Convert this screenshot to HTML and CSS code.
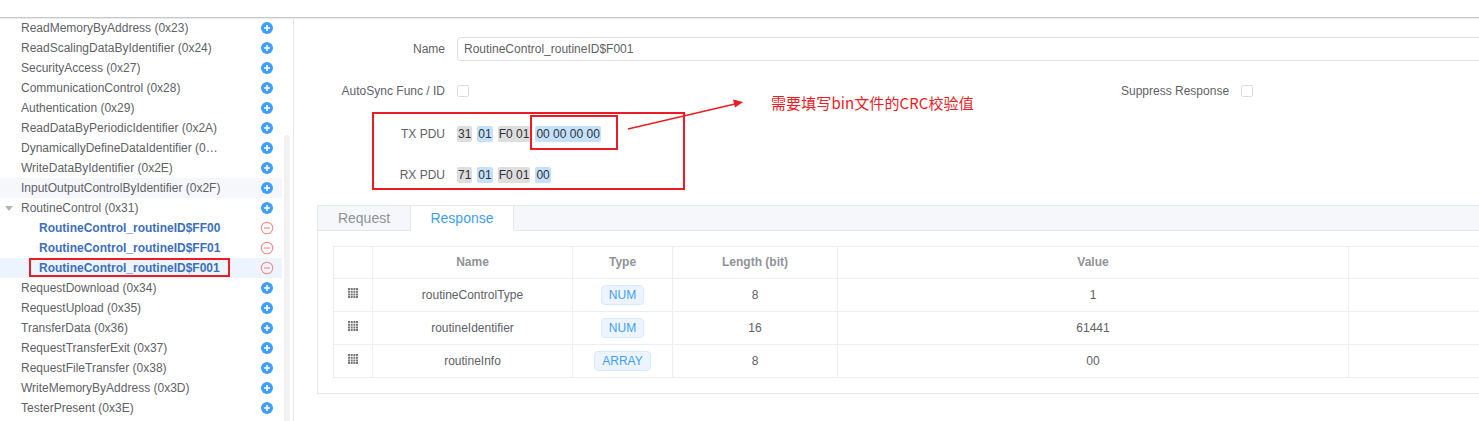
FILE: index.html
```html
<!DOCTYPE html>
<html lang="en">
<head>
<meta charset="utf-8">
<title>Routine Control</title>
<link rel="stylesheet" href="styles.css">
</head>
<body>
<svg class="defs" width="0" height="0" aria-hidden="true">
  <symbol id="plus" viewBox="0 0 12 12"><circle cx="6" cy="6" r="6" fill="#409eff"/><path d="M3 6h6M6 3v6" stroke="#fff" stroke-width="1.5"/></symbol>
  <symbol id="minus" viewBox="0 0 14 14"><circle cx="7" cy="7" r="5.75" fill="none" stroke="#f78989" stroke-width="1.1"/><path d="M4 7h6" stroke="#f9a7a7" stroke-width="1.6"/></symbol>
  <symbol id="grid" viewBox="0 0 10 10"><path fill="#777" d="M0 0h2v2H0zM2.7 0h2v2h-2zM5.4 0h2v2h-2zM8 0h2v2H8zM0 2.7h2v2H0zM2.7 2.7h2v2h-2zM5.4 2.7h2v2h-2zM8 2.7h2v2H8zM0 5.4h2v2H0zM2.7 5.4h2v2h-2zM5.4 5.4h2v2h-2zM8 5.4h2v2H8zM0 8h2v2H0zM2.7 8h2v2h-2zM5.4 8h2v2h-2zM8 8h2v2H8z"/></symbol>
</svg>
<header class="topbar"></header>
<div class="layout">
  <aside class="sidebar">
    <ul class="tree">
      <li class="row"><span class="label">ReadMemoryByAddress (0x23)</span><svg class="ico"><use href="#plus"/></svg></li>
      <li class="row"><span class="label">ReadScalingDataByIdentifier (0x24)</span><svg class="ico"><use href="#plus"/></svg></li>
      <li class="row"><span class="label">SecurityAccess (0x27)</span><svg class="ico"><use href="#plus"/></svg></li>
      <li class="row"><span class="label">CommunicationControl (0x28)</span><svg class="ico"><use href="#plus"/></svg></li>
      <li class="row"><span class="label">Authentication (0x29)</span><svg class="ico"><use href="#plus"/></svg></li>
      <li class="row"><span class="label">ReadDataByPeriodicIdentifier (0x2A)</span><svg class="ico"><use href="#plus"/></svg></li>
      <li class="row"><span class="label">DynamicallyDefineDataIdentifier (0…</span><svg class="ico"><use href="#plus"/></svg></li>
      <li class="row"><span class="label">WriteDataByIdentifier (0x2E)</span><svg class="ico"><use href="#plus"/></svg></li>
      <li class="row hover"><span class="label">InputOutputControlByIdentifier (0x2F)</span><svg class="ico"><use href="#plus"/></svg></li>
      <li class="row"><span class="caret"></span><span class="label">RoutineControl (0x31)</span><svg class="ico"><use href="#plus"/></svg></li>
      <li class="row child"><span class="label">RoutineControl_routineID$FF00</span><svg class="ico-m"><use href="#minus"/></svg></li>
      <li class="row child"><span class="label">RoutineControl_routineID$FF01</span><svg class="ico-m"><use href="#minus"/></svg></li>
      <li class="row child selected"><span class="label">RoutineControl_routineID$F001</span><svg class="ico-m"><use href="#minus"/></svg></li>
      <li class="row"><span class="label">RequestDownload (0x34)</span><svg class="ico"><use href="#plus"/></svg></li>
      <li class="row"><span class="label">RequestUpload (0x35)</span><svg class="ico"><use href="#plus"/></svg></li>
      <li class="row"><span class="label">TransferData (0x36)</span><svg class="ico"><use href="#plus"/></svg></li>
      <li class="row"><span class="label">RequestTransferExit (0x37)</span><svg class="ico"><use href="#plus"/></svg></li>
      <li class="row"><span class="label">RequestFileTransfer (0x38)</span><svg class="ico"><use href="#plus"/></svg></li>
      <li class="row"><span class="label">WriteMemoryByAddress (0x3D)</span><svg class="ico"><use href="#plus"/></svg></li>
      <li class="row"><span class="label">TesterPresent (0x3E)</span><svg class="ico"><use href="#plus"/></svg></li>
    </ul>
    <div class="thumb"></div>
    <div class="mark mark-tree"></div>
  </aside>
  <main class="main">
    <div class="inner">
      <div class="field field-name">
        <label class="flabel">Name</label>
        <div class="input">RoutineControl_routineID$F001</div>
      </div>
      <div class="field field-sync">
        <label class="flabel">AutoSync Func / ID</label>
        <span class="check"></span>
        <label class="flabel-free">Suppress Response</label>
        <span class="check"></span>
      </div>
      <div class="field field-tx">
        <label class="flabel">TX PDU</label>
        <div class="chips">
          <span class="chip gray">31</span><span class="chip blue">01</span><span class="chip gray">F0 01</span><span class="chip blue">00 00 00 00</span>
        </div>
      </div>
      <div class="field field-rx">
        <label class="flabel">RX PDU</label>
        <div class="chips">
          <span class="chip gray">71</span><span class="chip blue">01</span><span class="chip gray">F0 01</span><span class="chip blue">00</span>
        </div>
      </div>
      <section class="tabs">
        <div class="tabbar">
          <span class="tab">Request</span>
          <span class="tab active">Response</span>
        </div>
        <div class="panel">
          <table class="grid">
            <colgroup>
              <col class="c1"><col class="c2"><col class="c3"><col class="c4"><col class="c5"><col class="c6">
            </colgroup>
            <thead>
              <tr><th></th><th>Name</th><th>Type</th><th>Length (bit)</th><th>Value</th><th></th></tr>
            </thead>
            <tbody>
              <tr><td><svg class="drag"><use href="#grid"/></svg></td><td>routineControlType</td><td><span class="tag">NUM</span></td><td>8</td><td>1</td><td></td></tr>
              <tr><td><svg class="drag"><use href="#grid"/></svg></td><td>routineIdentifier</td><td><span class="tag">NUM</span></td><td>16</td><td>61441</td><td></td></tr>
              <tr><td><svg class="drag"><use href="#grid"/></svg></td><td>routineInfo</td><td><span class="tag">ARRAY</span></td><td>8</td><td>00</td><td></td></tr>
            </tbody>
          </table>
        </div>
      </section>
    </div>
    <div class="mark mark-pdu"></div>
    <div class="mark mark-crc"></div>
    <svg class="arrow" width="120" height="34" viewBox="0 0 120 34"><path d="M1 32 L108 7" stroke="#ed1c24" stroke-width="1.5" fill="none"/><path d="M116 5 L106 2.5 L108 10.5 Z" fill="#ed1c24"/></svg>
    <div class="note">需要填写bin文件的CRC校验值</div>
  </main>
</div>
</body>
</html>
```

FILE: styles.css
```css
* { box-sizing: border-box; }
html, body { margin: 0; height: 100%; overflow: hidden; background: #fff; }
body { font-family: "Liberation Sans", Arial, sans-serif; font-size: 12px; color: #606266; }
.defs { position: absolute; }

.topbar { height: 18px; border-bottom: 1px solid #c8c9cc; box-shadow: 0 1px 0 #e9e9eb; position: relative; z-index: 2; background: #fff; }
.layout { display: flex; height: 403px; overflow: hidden; }

.sidebar { width: 294px; flex: none; position: relative; border-right: 1px solid #e6e6e6; overflow: hidden; }
.tree { list-style: none; margin: 0; padding: 0; width: 282px; }
.row { height: 20px; display: flex; align-items: center; padding-left: 21px; position: relative; }
.row .label { white-space: nowrap; }
.row.hover { background: #f5f7fa; }
.row.selected { background: #ecf5ff; }
.row.child { padding-left: 39px; }
.row.child .label { font-weight: bold; color: #3c6fbe; }
.ico { width: 12px; height: 12px; position: absolute; left: 261px; top: 4px; }
.ico-m { width: 14px; height: 14px; position: absolute; left: 260px; top: 3px; }
.caret { position: absolute; left: 5px; top: 8px; border-style: solid; border-width: 5px 4px 0; border-color: #b4b4b4 transparent transparent; }
.thumb { position: absolute; left: 284px; top: 117px; width: 6px; bottom: 0; background: #f1f1f1; border-radius: 3px 3px 0 0; }

.main { flex: 1; min-width: 0; position: relative; overflow: hidden; }
.inner { width: 1700px; }
.field { display: flex; align-items: center; }
.flabel { width: 151px; margin-right: 12px; text-align: right; flex: none; }
.flabel-free { margin-left: 652px; margin-right: 12px; }
.field-name { margin-top: 19px; height: 24px; }
.field-sync { margin-top: 18px; height: 24px; }
.field-tx { margin-top: 19px; height: 24px; }
.field-rx { margin-top: 17px; height: 24px; }
.input { flex: 1; height: 24px; line-height: 22px; padding: 0 6px; border: 1px solid #dcdfe6; border-radius: 4px; }
.check { width: 12px; height: 12px; border: 1px solid #dcdfe6; border-radius: 2px; flex: none; }
.chips { display: flex; gap: 5px; }
.chip { height: 16px; line-height: 16px; padding: 0 1px; border-radius: 2px; color: #303133; white-space: pre; }
.chip.gray { background: #dedede; }
.chip.blue { background: #c4e1ff; }

.tabs { margin: 18px 0 0 23px; border: 1px solid #e4e7ed; height: 189px; }
.tabbar { display: flex; height: 25px; background: #f5f7fa; border-bottom: 1px solid #e4e7ed; }
.tab { height: 25px; line-height: 25px; font-size: 14px; text-align: center; color: #909399; width: 93px; border-right: 1px solid #e4e7ed; }
.tab.active { width: 103px; color: #409eff; background: #fff; border-bottom: 1px solid #fff; }
.panel { padding: 15px; }
.grid { border-collapse: collapse; table-layout: fixed; width: 1350px; }
.c1 { width: 39px; } .c2 { width: 200px; } .c3 { width: 100px; } .c4 { width: 165px; } .c5 { width: 511px; }
.grid th, .grid td { border: 1px solid #ebeef5; text-align: center; padding: 0; }
.grid th { height: 32px; padding-bottom: 2px; font-weight: bold; color: #909399; }
.grid td { height: 33px; }
.tag { display: inline-block; height: 20px; line-height: 18px; padding: 0 7px; background: #ecf5ff; border: 1px solid #d9ecff; border-radius: 4px; color: #409eff; vertical-align: middle; }
.drag { width: 10px; height: 10px; display: block; margin: -5px auto 0; }

.mark { position: absolute; border: 2px solid #ed1c24; pointer-events: none; }
.mark-tree { left: 29px; top: 240px; width: 201px; height: 19px; }
.mark-pdu { left: 78px; top: 94px; width: 313px; height: 78px; }
.mark-crc { left: 236px; top: 97px; width: 88px; height: 35px; }
.arrow { position: absolute; left: 333px; top: 79px; }
.note { position: absolute; left: 477px; top: 75px; font-family: "Noto Sans CJK SC", "Liberation Sans", sans-serif; font-size: 15px; letter-spacing: 0.1px; line-height: 20px; color: #ed1c24; white-space: nowrap; }
```
